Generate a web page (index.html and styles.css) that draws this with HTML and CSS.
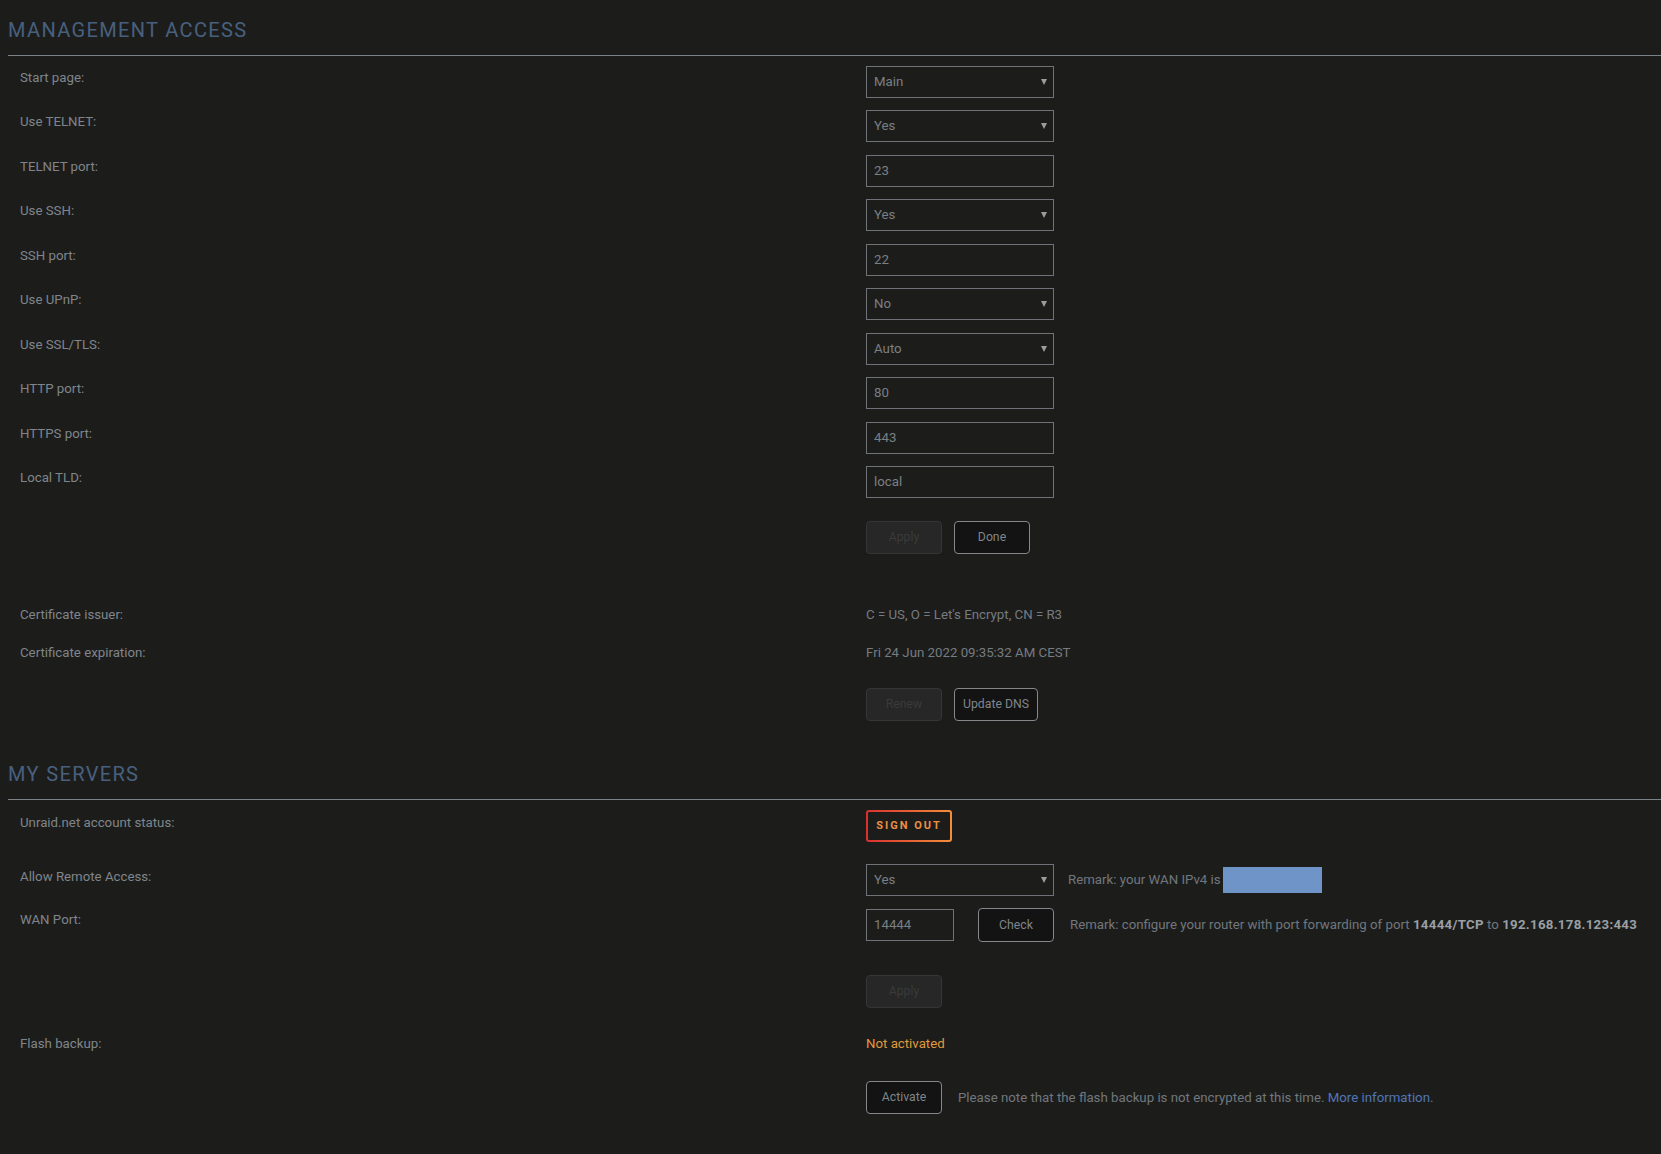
FILE: index.html
```html
<!DOCTYPE html>
<html lang="en">
<head>
<meta charset="utf-8">
<title>Management Access</title>
<link rel="stylesheet" href="styles.css">
</head>
<body>
<main class="page">
  <section class="section">
    <h2 class="title">Management Access</h2>
    <div class="rows">
      <div class="row ctl"><div class="label">Start page:</div><div class="field"><span class="select"><select><option>Main</option></select></span></div></div>
      <div class="row ctl"><div class="label">Use TELNET:</div><div class="field"><span class="select"><select><option>Yes</option></select></span></div></div>
      <div class="row ctl"><div class="label">TELNET port:</div><div class="field"><input class="input" type="text" value="23"></div></div>
      <div class="row ctl"><div class="label">Use SSH:</div><div class="field"><span class="select"><select><option>Yes</option></select></span></div></div>
      <div class="row ctl"><div class="label">SSH port:</div><div class="field"><input class="input" type="text" value="22"></div></div>
      <div class="row ctl"><div class="label">Use UPnP:</div><div class="field"><span class="select"><select><option>No</option></select></span></div></div>
      <div class="row ctl"><div class="label">Use SSL/TLS:</div><div class="field"><span class="select"><select><option>Auto</option></select></span></div></div>
      <div class="row ctl"><div class="label">HTTP port:</div><div class="field"><input class="input" type="text" value="80"></div></div>
      <div class="row ctl"><div class="label">HTTPS port:</div><div class="field"><input class="input" type="text" value="443"></div></div>
      <div class="row ctl"><div class="label">Local TLD:</div><div class="field"><input class="input" type="text" value="local"></div></div>
      <div class="row actions first-actions"><div class="label"></div><div class="field gap"><button class="btn" disabled>Apply</button><button class="btn">Done</button></div></div>
      <div class="row info cert-first"><div class="label">Certificate issuer:</div><div class="value">C = US, O = Let's Encrypt, CN = R3</div></div>
      <div class="row info cert-second"><div class="label">Certificate expiration:</div><div class="value">Fri 24 Jun 2022 09:35:32 AM CEST</div></div>
      <div class="row actions renew-actions"><div class="label"></div><div class="field gap"><button class="btn" disabled>Renew</button><button class="btn">Update DNS</button></div></div>
    </div>
  </section>

  <section class="section servers">
    <h2 class="title">My Servers</h2>
    <div class="rows">
      <div class="row signout-row"><div class="label">Unraid.net account status:</div><div class="field"><button class="signout">Sign Out</button></div></div>
      <div class="row remote-row"><div class="label">Allow Remote Access:</div><div class="field"><span class="select"><select><option>Yes</option></select></span><span class="remark remark-ip">Remark: your WAN IPv4 is<span class="ip"></span></span></div></div>
      <div class="row wan-row"><div class="label">WAN Port:</div><div class="field"><input class="input narrow" type="text" value="14444"><button class="btn check">Check</button><span class="remark remark-port">Remark: configure your router with port forwarding of port <b>14444/TCP</b> to <b>192.168.178.123:443</b></span></div></div>
      <div class="row actions wan-actions"><div class="label"></div><div class="field"><button class="btn" disabled>Apply</button></div></div>
      <div class="row info flash-row"><div class="label">Flash backup:</div><div class="value warn">Not activated</div></div>
      <div class="row actions activate-actions"><div class="label"></div><div class="field"><button class="btn">Activate</button><span class="note">Please note that the flash backup is not encrypted at this time. <a class="link" href="#">More information</a>.</span></div></div>
    </div>
  </section>
</main>
</body>
</html>
```

FILE: styles.css
```css
* {
  box-sizing: border-box;
}

body {
  margin: 0;
  background: #1c1d1b;
  color: #80858b;
  font-family: Roboto, "Liberation Sans", sans-serif;
  font-size: 13.25px;
}

.page {
  padding: 0 0 40px 8px;
}

.title {
  margin: 0;
  height: 56px;
  padding-top: 19px;
  border-bottom: 1px solid #7b8188;
  font-weight: 400;
  font-size: 20px;
  line-height: 22px;
  letter-spacing: 1.35px;
  color: #48607f;
  text-transform: uppercase;
}

.servers .title {
  margin-top: 23px;
}

.rows {
  margin-top: 10px;
}

.row {
  display: grid;
  grid-template-columns: 858px 1fr;
}

.label {
  padding-left: 12px;
  line-height: 24px;
  color: #80858b;
}

.field {
  display: flex;
  align-items: center;
}

.gap {
  gap: 12px;
}

.ctl {
  height: 44.44px;
  align-items: start;
}

.actions {
  height: 33px;
}

.first-actions {
  margin-top: 10.5px;
}

.info {
  height: 20px;
}

.info .label,
.info .value {
  line-height: 20px;
}

.value {
  color: #767b81;
}

.cert-first {
  margin-top: 51px;
}

.cert-second {
  margin-top: 18px;
}

.renew-actions {
  margin-top: 25px;
}

/* select */
.select {
  position: relative;
  display: inline-block;
  width: 188px;
  height: 32px;
}

.select select {
  appearance: none;
  -webkit-appearance: none;
  width: 100%;
  height: 100%;
  margin: 0;
  padding: 0 0 1px 7px;
  background: transparent;
  border: 1px solid #6f7378;
  border-radius: 0;
  color: #7a7f84;
  font-family: inherit;
  font-size: 13.25px;
}

.select::after {
  content: "";
  position: absolute;
  right: 7px;
  top: 13px;
  border-left: 3px solid transparent;
  border-right: 3px solid transparent;
  border-top: 6px solid #9a9da0;
  pointer-events: none;
}

.input {
  width: 188px;
  height: 32px;
  margin: 0;
  padding: 0 7px 1px;
  background: transparent;
  border: 1px solid #6f7378;
  border-radius: 0;
  color: #7a7f84;
  font-family: inherit;
  font-size: 13.25px;
}

.input.narrow {
  width: 88px;
}

/* buttons */
.btn {
  min-width: 76px;
  height: 33px;
  margin: 0;
  padding: 0 8px;
  background: #121312;
  border: 1px solid #85888b;
  border-radius: 4px;
  color: #80858a;
  font-family: inherit;
  font-size: 12.25px;
}

.btn:disabled {
  background: #262726;
  border-color: #343534;
  color: #3a3b3a;
}

.btn.check {
  height: 34px;
  margin-left: 24px;
}

.signout {
  width: 86px;
  height: 32px;
  margin: 0;
  padding: 0;
  border: 2px solid transparent;
  border-radius: 3px;
  background:
    linear-gradient(#1c1d1b, #1c1d1b) padding-box,
    linear-gradient(90deg, #d8312f, #f28f3b) border-box;
  color: #e98f47;
  font-family: inherit;
  font-size: 11px;
  font-weight: 700;
  letter-spacing: 2px;
  text-transform: uppercase;
}

/* My Servers rows */
.signout-row {
  height: 54px;
  align-items: start;
}

.signout-row .label {
  line-height: 25px;
}

.remote-row {
  height: 44px;
  align-items: start;
}

.remote-row .label {
  line-height: 25px;
}

.wan-row {
  height: 34px;
  align-items: start;
}

.wan-row .label {
  line-height: 23px;
}

.remark {
  color: #71777d;
}

.remark b {
  color: #9a9fa4;
  font-weight: 700;
  letter-spacing: 0.3px;
}

.remark-ip {
  display: inline-flex;
  align-items: center;
  margin-left: 14px;
}

.ip {
  display: inline-block;
  width: 99px;
  height: 26px;
  margin-left: 2px;
  background: #6f95c8;
}

.remark-port {
  margin-left: 16px;
}

.wan-actions {
  margin-top: 33px;
}

.flash-row {
  margin-top: 26px;
}

.warn {
  color: #e09a3d;
}

.activate-actions {
  margin-top: 27px;
}

.note {
  margin-left: 16px;
  color: #71777d;
}

.link {
  color: #5275b8;
  text-decoration: none;
}
```
